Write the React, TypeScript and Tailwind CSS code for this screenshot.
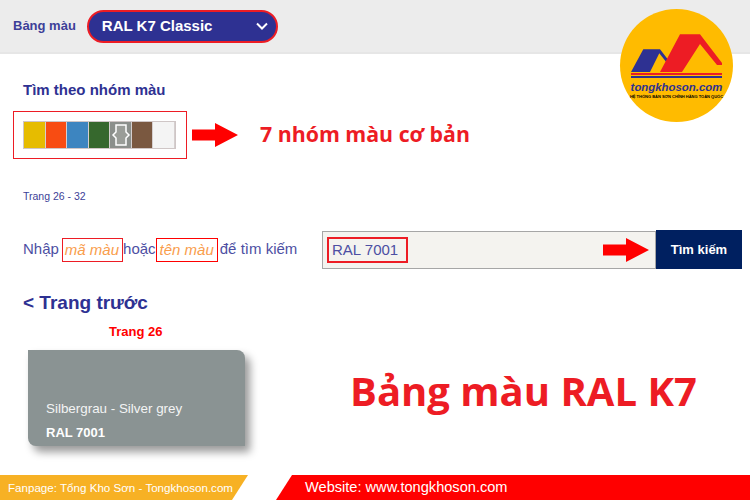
const swatches = ["bg-[#e6bc00]", "bg-[#f84c12]", "bg-[#3d85c0]", "bg-[#36682d]", "bg-[#8b8f8b]", "bg-[#7a5840]", "bg-[#f4f4f4]"];

function Arrow({ className }: { className: string }) {
  return (
    <svg viewBox="0 0 46 24" className={className}>
      <path d="M0 6.5H23V0L46 12L23 24V17.5H0Z" fill="#ff0000" />
    </svg>
  );
}

function Logo() {
  return (
    <div className="absolute left-[620px] top-[9px] flex h-[113px] w-[113px] flex-col items-center rounded-full bg-[#ffbb00] pt-[25px]">
      <svg viewBox="0 0 91 39" className="h-[39px] w-[91px] shrink-0">
        <path d="M0 38L12.3 15.3H29L37.3 26L35 27.7L28.3 19.3L19 38Z" fill="#2e3192" />
        <path d="M29 38L49 0.3H69L91 29V31H86L69 10L51 38Z" fill="#ed1c24" />
      </svg>
      <div className="h-[1.5px] w-[91px] shrink-0 bg-[#ed1c24]" />
      <div className="mt-[1px] h-[2.5px] w-[91px] shrink-0 bg-[#2e3192]" />
      <div className="mt-[2px] text-[11.4px] leading-[14px] font-bold italic whitespace-nowrap text-[#2e3192]">tongkhoson.com</div>
      <div className="text-[4px] leading-[6px] font-bold whitespace-nowrap text-black">HỆ THỐNG BÁN SƠN CHÍNH HÃNG TOÀN QUỐC</div>
    </div>
  );
}

export default function App() {
  return (
    <div className="relative flex h-[500px] w-[750px] flex-col overflow-hidden bg-white font-['Liberation_Sans',Arial,sans-serif] text-[#2e3192]">
      <header className="flex h-[54px] shrink-0 items-center gap-[11px] border-b-2 border-[#e6e6e6] bg-[#ececec] pl-[13px]">
        <span className="text-[13px] font-bold text-[#3d3f98]">Bảng màu</span>
        <div className="flex h-[33px] w-[191px] items-center justify-between rounded-full border-2 border-[#ed1c24] bg-[#2e3192] pr-[7px] pl-[13px] text-white">
          <span className="text-[15px] font-bold">RAL K7 Classic</span>
          <svg viewBox="0 0 14 14" className="h-[14px] w-[14px]" fill="none" stroke="white" strokeWidth="2">
            <path d="M2 4.5L7 9.5L12 4.5" />
          </svg>
        </div>
      </header>

      <main className="flex flex-1 flex-col pl-[13px]">
        <h2 className="mt-[27px] pl-[10px] text-[15px] leading-[18px] font-bold">Tìm theo nhóm màu</h2>

        <div className="mt-[12px] flex items-center">
          <div className="flex h-[48px] w-[174px] items-center border border-[#ed1c24] pl-[9px]">
            <div className="flex h-[28px] w-[153px] border border-[#cfc6c6]">
              {swatches.map((color, i) => (
                <div key={color} className={`flex h-full flex-1 items-center justify-center border-r border-[#d5cfcf] ${color}`}>
                  {i === 4 && (
                    <svg viewBox="0 0 20 26" className="h-[26px] w-[20px]" fill="none" stroke="white" strokeWidth="1.5">
                      <path d="M5 3H15V10L18 13L15 16V23H5V16L2 13L5 10Z" fill="#9a9d98" />
                    </svg>
                  )}
                </div>
              ))}
            </div>
          </div>
          <Arrow className="ml-[5px] h-[24px] w-[46px]" />
          <span className="ml-[22px] pb-[2px] font-['Open_Sans',sans-serif] text-[21.3px] font-bold text-[#ed1c24]">7 nhóm màu cơ bản</span>
        </div>

        <p className="mt-[29px] pl-[10px] text-[10.5px] leading-[16px] text-[#3d3f98]">Trang 26 - 32</p>

        <div className="mt-[26px] flex h-[39px] items-center pl-[10px]">
          <div className="flex w-[299px] items-center text-[15px] text-[#4d4fa3]">
            Nhập
            <span className="ml-[3px] border border-[#ed1c24] pr-[3px] pl-[2px] leading-[22px] italic text-[#f99d4c]">mã màu</span>
            hoặc
            <span className="mr-[2px] border border-[#ff0000] px-[3px] leading-[22px] italic text-[#f99d4c]">tên màu</span>
            để tìm kiếm
          </div>
          <div className="flex h-[38px] w-[334px] items-center border border-[#a6a6a6] bg-[#f4f3ef] pr-[6px] pl-[4px]">
            <span className="w-[81px] border-2 border-[#ed1c24] pl-[3px] text-[15px] leading-[22px] text-[#4d4fa3]">RAL 7001</span>
            <Arrow className="ml-auto h-[24px] w-[46px]" />
          </div>
          <button className="h-[39px] w-[86px] bg-[#002060] text-[13px] font-bold text-white">Tìm kiếm</button>
        </div>

        <h2 className="mt-[22px] pl-[10px] text-[19px] leading-[24px] font-bold">&lt; Trang trước</h2>
        <p className="mt-[10px] pl-[96px] text-[13px] leading-[14px] font-bold text-[#ff0000]">Trang 26</p>

        <div className="mt-[11px] flex items-center">
          <div className="ml-[15px] flex h-[96px] w-[217px] flex-col justify-end rounded-tr-[8px] rounded-bl-[8px] bg-[#8a9393] pb-[1px] pl-[18px] text-white shadow-[5px_6px_8px_rgba(0,0,0,0.4)]">
            <span className="text-[13.4px] leading-[24px] opacity-90">Silbergrau - Silver grey</span>
            <span className="text-[13px] leading-[24px] font-bold">RAL 7001</span>
          </div>
          <h1 className="ml-[105px] pb-[15px] font-['Open_Sans',sans-serif] text-[40px] leading-none font-bold whitespace-nowrap text-[#ed1c24]">Bảng màu RAL K7</h1>
        </div>
      </main>

      <footer className="flex h-[25px] shrink-0 items-center justify-between">
        <div className="flex h-full w-[248px] items-center bg-[#f7b124] pl-[8px] text-[11.6px] text-white [clip-path:polygon(0_0,100%_0,232px_100%,0_100%)]">
          Fanpage: Tổng Kho Sơn - Tongkhoson.com
        </div>
        <div className="flex h-full w-[474px] items-center bg-[#ff0000] pt-[1px] pl-[29px] text-[14.6px] text-white [clip-path:polygon(16px_0,100%_0,100%_100%,0_100%)]">
          Website: www.tongkhoson.com
        </div>
      </footer>

      <Logo />
    </div>
  );
}
